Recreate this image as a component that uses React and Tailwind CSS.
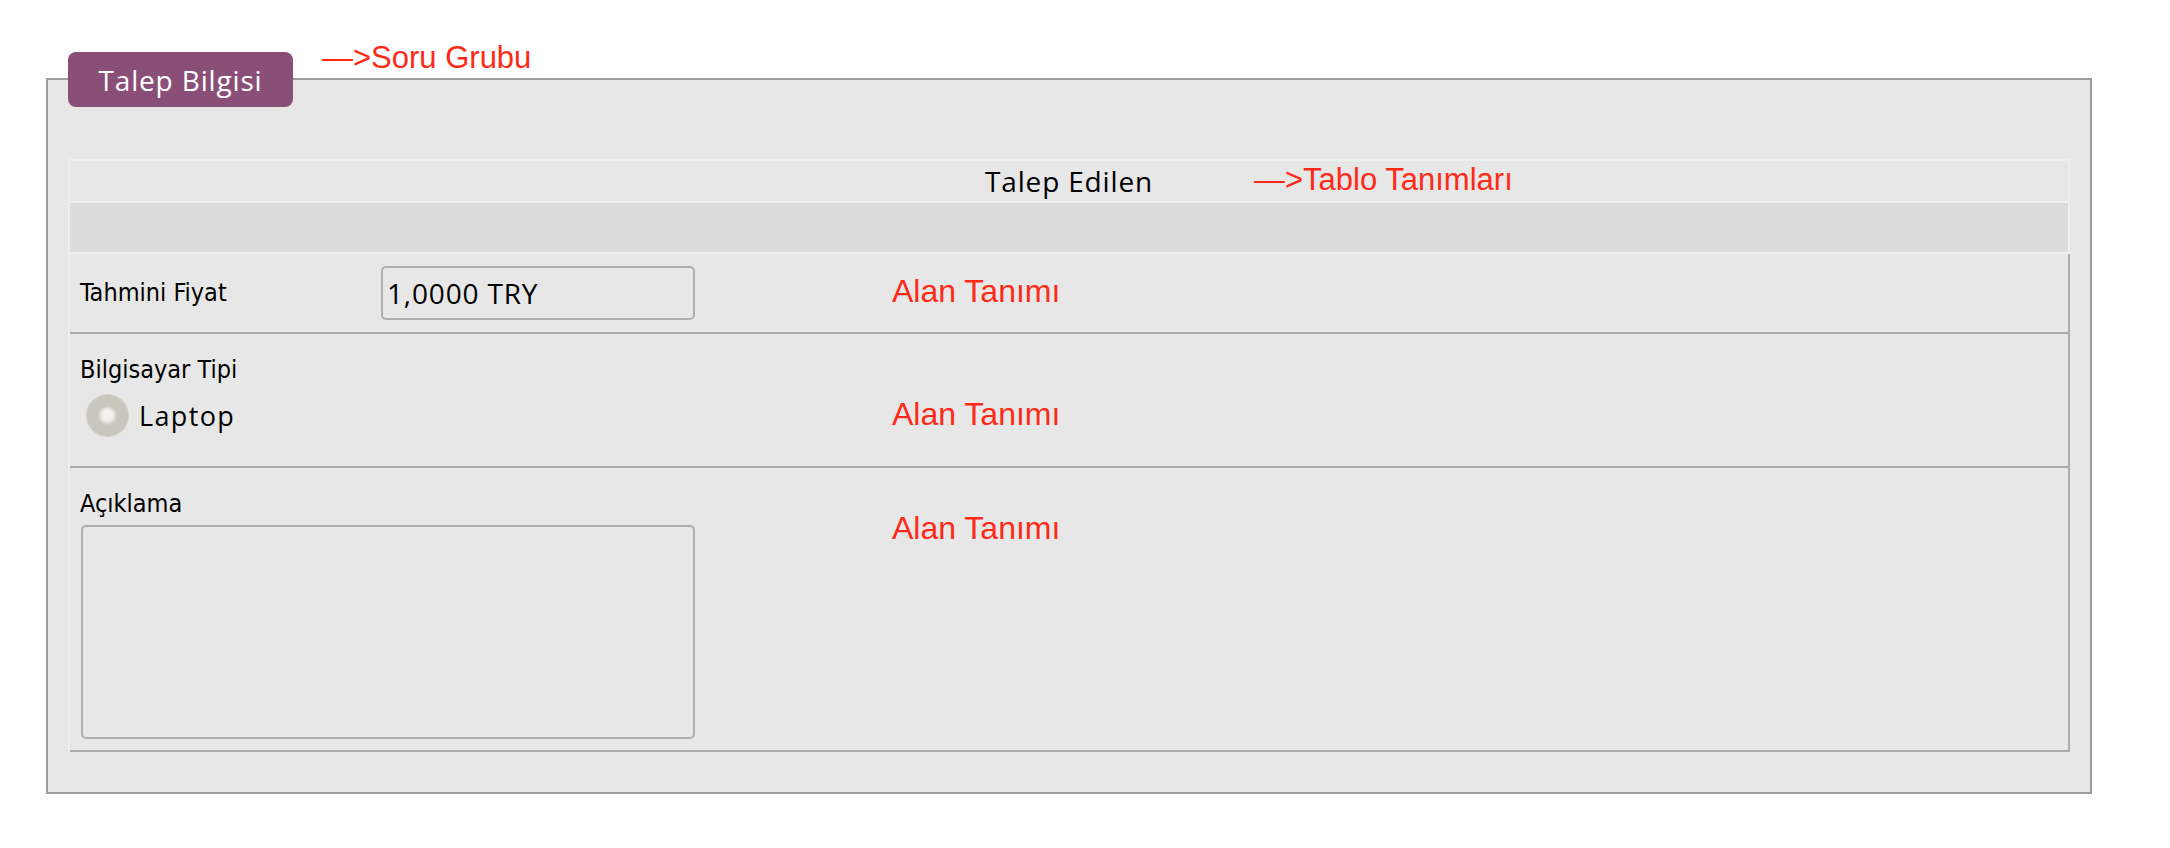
export default function App() {
  return (
    <div className="min-h-[848px] w-full bg-white pt-[78px] pl-[46px] font-['Liberation_Sans',Arial,sans-serif]">
      <div className="relative h-[716px] w-[2046px] border-2 border-[#9b9b9b] bg-[#e7e7e7] px-[20px] pt-[79px]">
        <div className="absolute left-[20px] -top-[28px] flex h-[55px] w-[225px] items-center justify-center rounded-lg bg-[#8a4f78] font-['Open_Sans',sans-serif] text-[28px] leading-none tracking-[0.03em] text-white">
          Talep Bilgisi
        </div>
        <div className="absolute left-[274px] -top-[40px] whitespace-nowrap text-[31px] leading-[36px] text-[#fe2a17]">
          —&gt;Soru Grubu
        </div>

        <div>
          <div className="relative flex h-[42px] items-center justify-center border-x-2 border-t-2 border-[#efefef] font-['Open_Sans',sans-serif] text-[28px] leading-none tracking-[0.03em] text-black">
            Talep Edilen
            <span className="absolute left-[1184px] top-[1px] whitespace-nowrap font-['Liberation_Sans',Arial,sans-serif] text-[31px] leading-[36px] tracking-normal text-[#fe2a17]">
              —&gt;Tablo Tanımları
            </span>
          </div>
          <div className="h-[53px] border-2 border-[#efefef] bg-[#dcdcdc]" />

          <div className="border-l-2 border-r-2 border-l-[#efefef] border-r-[#ababaf]">
            {/* Row 1 */}
            <div className="grid h-[80px] grid-cols-[812px_1fr] border-b-2 border-[#ababaf] pl-[10px]">
              <div className="flex h-full items-center">
                <div className="w-[301px] font-['DejaVu_Sans_Condensed','DejaVu_Sans',sans-serif] font-stretch-condensed text-[25px] leading-[28px] text-black">
                  Tahmini Fiyat
                </div>
                <div className="flex h-[54px] w-[314px] items-center rounded-[5px] border-2 border-[#aeaeb2] pl-[4px] font-['Open_Sans',sans-serif] text-[28px] leading-none tracking-[0.03em] text-black">
                  1,0000 TRY
                </div>
              </div>
              <div className="pt-[19px] text-[32px] leading-[36px] text-[#fe2a17]">Alan Tanımı</div>
            </div>

            {/* Row 2 */}
            <div className="grid h-[134px] grid-cols-[812px_1fr] border-b-2 border-[#ababaf] pl-[10px]">
              <div className="pt-[22px]">
                <div className="font-['DejaVu_Sans_Condensed','DejaVu_Sans',sans-serif] font-stretch-condensed text-[25px] leading-[28px] text-black">
                  Bilgisayar Tipi
                </div>
                <div className="mt-[10px] flex h-[43px] items-center">
                  <div className="ml-[6px] h-[43px] w-[43px] rounded-full bg-[radial-gradient(circle,#f3f2ef_0px,#f3f2ef_5px,#c9c6bd_10px,#c9c6bd_20px,#d6d4ce_21.5px)]" />
                  <div className="ml-[10px] font-['Open_Sans',sans-serif] text-[27px] leading-none tracking-[0.05em] text-black">
                    Laptop
                  </div>
                </div>
              </div>
              <div className="pt-[62px] text-[32px] leading-[36px] text-[#fe2a17]">Alan Tanımı</div>
            </div>

            {/* Row 3 */}
            <div className="grid h-[284px] grid-cols-[812px_1fr] border-b-2 border-[#ababaf] pl-[10px]">
              <div className="pt-[22px]">
                <div className="font-['DejaVu_Sans_Condensed','DejaVu_Sans',sans-serif] font-stretch-condensed text-[25px] leading-[28px] text-black">
                  Açıklama
                </div>
                <div className="ml-[1px] mt-[7px] h-[214px] w-[614px] rounded-[5px] border-2 border-[#aeaeb2]" />
              </div>
              <div className="pt-[42px] text-[32px] leading-[36px] text-[#fe2a17]">Alan Tanımı</div>
            </div>
          </div>
        </div>
      </div>
    </div>
  );
}
